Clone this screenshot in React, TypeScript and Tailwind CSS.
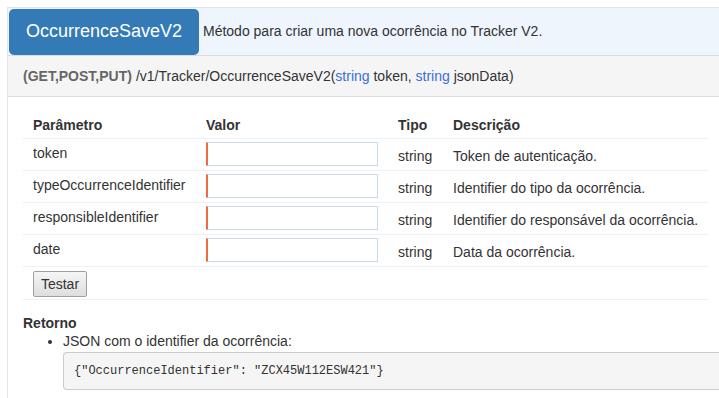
import React from "react";

const rows = [
  { name: "token", desc: "Token de autenticação." },
  { name: "typeOccurrenceIdentifier", desc: "Identifier do tipo da ocorrência." },
  { name: "responsibleIdentifier", desc: "Identifier do responsável da ocorrência." },
  { name: "date", desc: "Data da ocorrência." },
];

export default function App() {
  return (
    <div className="bg-white w-[719px] h-[398px] overflow-hidden pt-[7px] pl-[7px] text-[14px] text-[#333]" style={{ fontFamily: '"Liberation Sans", Arial, sans-serif' }}>
      <div className="border-l border-t border-[#e3e3e3] h-full">
        <div className="flex items-center bg-[#eef5fd] h-[48px] border-b border-[#dcdcdc]">
          <div className="ml-[1px] w-[190px] h-[46px] bg-[#337ab7] rounded-[5px] flex items-center justify-center text-white text-[18px]">
            OccurrenceSaveV2
          </div>
          <div className="ml-[4px]">Método para criar uma nova ocorrência no Tracker V2.</div>
        </div>
        <div className="bg-[#f5f5f5] h-[41px] border-b border-[#dcdcdc] flex items-center pl-[15px]">
          <span className="font-bold text-[#666]">(GET,POST,PUT)</span>
          <span className="ml-[4px]">/v1/Tracker/OccurrenceSaveV2(</span>
          <span className="text-[#3b6fd6]">string</span>
          <span>&nbsp;token,&nbsp;</span>
          <span className="text-[#3b6fd6]">string</span>
          <span>&nbsp;jsonData)</span>
        </div>
        <div className="pl-[15px] pt-[18px]">
          <table className="w-[686px] border-collapse">
            <thead>
              <tr className="h-[23px] border-b border-[#eaf1f8]">
                <th className="text-left font-bold pl-[10px] w-[173px] align-top">Parâmetro</th>
                <th className="text-left font-bold pl-[10px] w-[192px] align-top">Valor</th>
                <th className="text-left font-bold pl-[10px] w-[55px] align-top">Tipo</th>
                <th className="text-left font-bold pl-[10px] align-top">Descrição</th>
              </tr>
            </thead>
            <tbody>
              {rows.map((r) => (
                <tr key={r.name} className="h-[32px] border-b border-[#eaf1f8]">
                  <td className="pl-[10px] align-top pt-[4px]">{r.name}</td>
                  <td className="pl-[10px] align-top pt-[3px]">
                    <div className="w-[172px] h-[24px] border border-[#c9d9ea] border-l-2 border-l-[#f26a3d]"></div>
                  </td>
                  <td className="pl-[10px] align-top pt-[7px]">string</td>
                  <td className="pl-[10px] align-top pt-[7px]">{r.desc}</td>
                </tr>
              ))}
              <tr className="h-[33px] border-b border-[#eaf1f8]">
                <td colSpan={4} className="pl-[10px] align-top pt-[4px]">
                  <button className="h-[26px] w-[54px] border border-[#a0a0a0] rounded-[2px] bg-gradient-to-b from-[#f6f6f6] to-[#dedede] text-[#333] text-[14px] leading-none">
                    Testar
                  </button>
                </td>
              </tr>
            </tbody>
          </table>
          <div className="mt-[14px] font-bold leading-[18px]">Retorno</div>
          <ul className="pl-[40px] list-disc">
            <li className="leading-[18px]">JSON com o identifier da ocorrência:</li>
          </ul>
          <div className="ml-[40px] mt-[2px] h-[38px] bg-[#f5f5f5] border border-[#ccc] border-r-0 rounded-l-[4px] flex items-center pl-[10px] text-[12px] text-[#333]" style={{ fontFamily: '"Liberation Mono", "DejaVu Sans Mono", monospace' }}>
            {'{"OccurrenceIdentifier": "ZCX45W112ESW421"}'}
          </div>
        </div>
      </div>
    </div>
  );
}
